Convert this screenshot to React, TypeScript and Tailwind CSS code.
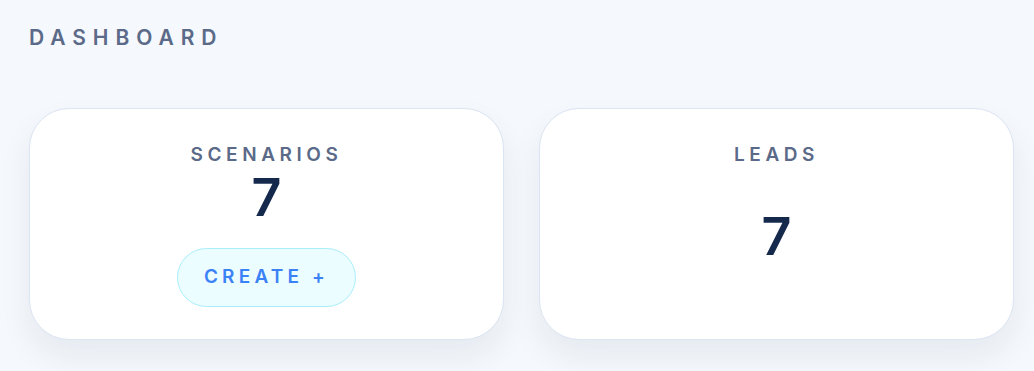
const font = { fontFamily: "Inter, 'Noto Sans', sans-serif" };

function StatCard({ label, value, action }: { label: string; value: number; action?: string }) {
  return (
    <div className="flex h-[232px] flex-col items-center rounded-[40px] border border-[#dae4f2] bg-white pt-[32px] shadow-[0_16px_32px_rgba(30,50,90,0.07)]">
      <p className="text-[19px] font-semibold uppercase leading-[28px] tracking-[0.24em] text-[#5b6a88]">{label}</p>
      {action ? (
        <>
          <p className="mt-[3px] text-[52px] font-semibold leading-[52px] text-[#15294d]">{value}</p>
          <button className="mt-[24px] h-[59px] w-[179px] rounded-full border border-[#a8eefa] bg-[#ecfdff] text-[19px] font-semibold tracking-[0.22em] text-[#3b82f6]">
            {action}
          </button>
        </>
      ) : (
        <p className="mt-[42px] text-[52px] font-semibold leading-[52px] text-[#15294d]">{value}</p>
      )}
    </div>
  );
}

export default function App() {
  return (
    <div style={font} className="min-h-[371px] bg-[#f5f8fc] pl-[29px] pr-[20px] pt-[22px]">
      <h1 className="text-[21px] font-semibold leading-[32px] tracking-[0.33em] text-[#5b6a88]">DASHBOARD</h1>
      <section className="mt-[54px] grid grid-cols-2 gap-[35px]">
        <StatCard label="Scenarios" value={7} action="CREATE +" />
        <StatCard label="Leads" value={7} />
      </section>
    </div>
  );
}
